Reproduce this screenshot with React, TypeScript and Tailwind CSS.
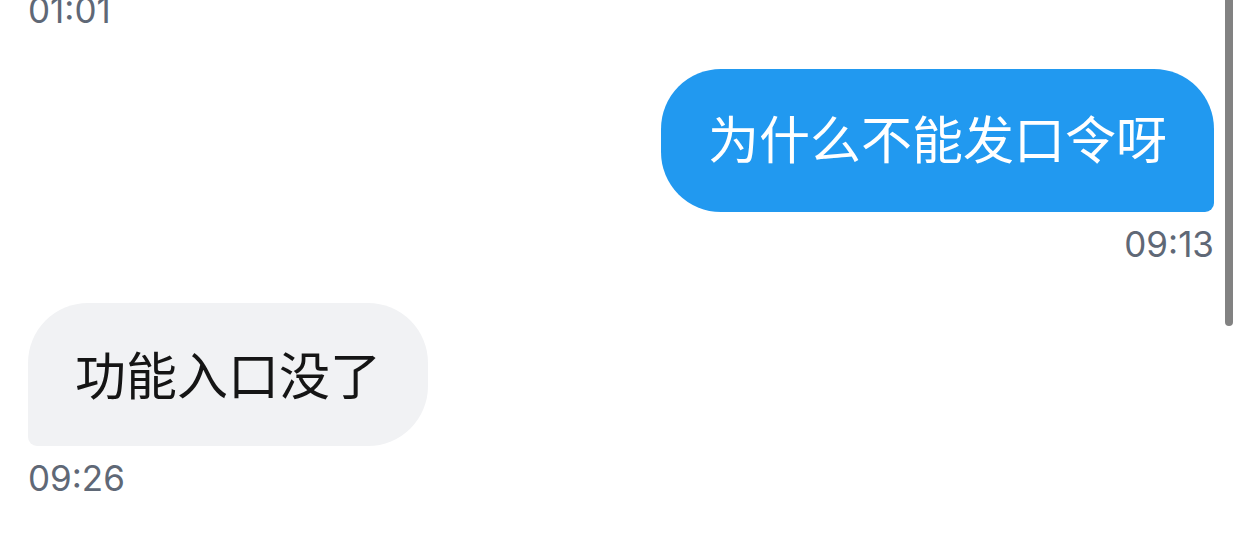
const messages = [
  { id: 1, mine: true, text: "为什么不能发口令呀", time: "09:13" },
  { id: 2, mine: false, text: "功能入口没了", time: "09:26" },
];

function Time(props: { value: string; right?: boolean; className?: string }) {
  return (
    <div
      className={`font-['Inter',sans-serif] text-[35px] leading-[43px] text-[#5f6876] ${
        props.right ? "text-right" : "text-left"
      } ${props.className ?? ""}`}
    >
      {props.value}
    </div>
  );
}

export default function App() {
  return (
    <div className="relative h-[536px] w-[1242px] overflow-hidden bg-white">
      <div className="flex flex-col px-[28px]">
        <Time value="01:01" className="mt-[-11px]" />

        {messages.map((m) => (
          <div key={m.id} className={`flex flex-col ${m.mine ? "items-end" : "items-start"} mt-[37px]`}>
            <div
              className={`flex h-[143px] items-center px-[47px] font-['Noto_Sans_CJK_SC',sans-serif] text-[51px] leading-[51px] ${
                m.mine
                  ? "rounded-[60px] rounded-br-[9px] bg-[#2199f0] pb-[6px] text-white"
                  : "rounded-[60px] rounded-bl-[9px] bg-[#f1f2f4] pb-[3px] text-[#151515]"
              }`}
            >
              {m.text}
            </div>
            <Time value={m.time} right={m.mine} className="mt-[11px]" />
          </div>
        ))}
      </div>

      {/* overlay scrollbar */}
      <div className="absolute right-[9px] top-0 h-[326px] w-[8px] rounded-b-full bg-[#828282]" />
    </div>
  );
}
